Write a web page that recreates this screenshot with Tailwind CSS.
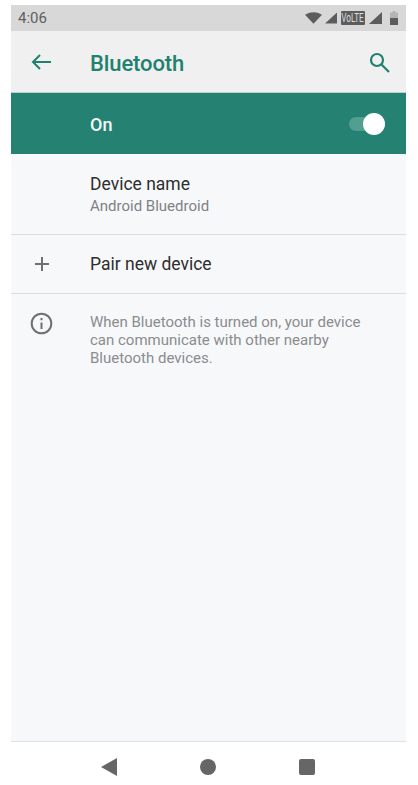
<!doctype html>
<html><head><meta charset="utf-8"><script src="https://cdn.jsdelivr.net/npm/@tailwindcss/browser@4"></script></head>
<body class="bg-white font-['Roboto',sans-serif]">
<div class="w-[418px] h-[785px] overflow-hidden bg-white pt-[5px] flex flex-col">
  <div class="ml-[11px] w-[395px] flex-1 flex flex-col bg-[#f7f8fa]">
    <div class="h-[26px] bg-[#d8d8d8] flex items-center justify-between pl-[7px] pr-[8px] shrink-0">
      <span class="text-[15px] text-[#5f5f5f] leading-none">4:06</span>
      <div class="flex items-center gap-[3px]">
        <svg width="17" height="12" viewBox="0 0 18 12"><path d="M0 2.5Q9-2.5 18 2.5L9 12Z" fill="#5c5c5c"/></svg>
        <svg width="12" height="12" viewBox="0 0 13 12"><path d="M13 0V12H0Z" fill="#5c5c5c"/></svg>
        <span class="ml-[1px] bg-[#5c5c5c] text-[#dcdcdc] h-[14px] w-[24px] rounded-[1px] flex items-center justify-center overflow-hidden"><span class="inline-block text-[12px] leading-[14px] whitespace-nowrap scale-x-[0.68]">VoLTE</span></span>
        <svg class="ml-[1px]" width="13" height="12" viewBox="0 0 13 12"><path d="M13 0V12H0Z" fill="#5c5c5c"/></svg>
        <svg class="ml-[5px]" width="8" height="14" viewBox="0 0 8 14"><path d="M2.5 0H5.5V1.5H8V14H0V1.5H2.5Z" fill="#b4b4b4"/><path d="M0 7H8V14H0Z" fill="#5c5c5c"/></svg>
      </div>
    </div>
    <div class="h-[62px] bg-[#f0f0f0] flex items-center shrink-0 border-b border-[#b9d2cc] pt-[1px]">
      <div class="w-[79px] pl-[19px] flex items-center shrink-0">
        <svg width="22" height="18" viewBox="0 0 22 18" fill="none" stroke="#21816f" stroke-width="2"><path d="M21 9H3M10 2 3 9l7 7"/></svg>
      </div>
      <span class="text-[22px] font-medium text-[#21816f] flex-1 leading-none pt-[3px] tracking-[-0.1px]">Bluetooth</span>
      <svg class="mr-[16px]" width="21" height="21" viewBox="0 0 21 21" fill="none" stroke="#21816f" stroke-width="2.2"><circle cx="8" cy="8" r="6"/><path d="M12.5 12.5 20 20"/></svg>
    </div>
    <div class="h-[61px] bg-[#258272] flex items-center shrink-0">
      <span class="pl-[79px] text-[18px] font-medium text-[#f4f8f7] flex-1 pt-[1px] tracking-[0.1px]">On</span>
      <div class="relative mr-[21px] w-[36px] h-[14px] rounded-full bg-[#5ba697]/80">
        <div class="absolute right-0 -top-[4px] w-[22px] h-[22px] rounded-full bg-white"></div>
      </div>
    </div>
    <div class="h-[81px] border-b border-[#dcdde0] pl-[79px] flex flex-col justify-center shrink-0">
      <div class="text-[17.5px] leading-[24px] text-[#2e2e2e]">Device name</div>
      <div class="text-[15px] leading-[20px] text-[#808285]">Android Bluedroid</div>
    </div>
    <div class="h-[59px] border-b border-[#dcdde0] flex items-center shrink-0">
      <div class="w-[79px] pl-[22px] shrink-0">
        <svg width="18" height="18" viewBox="0 0 18 18" fill="none" stroke="#6f7072" stroke-width="2"><path d="M9 2V16M2 9H16"/></svg>
      </div>
      <span class="text-[17.5px] text-[#2e2e2e] pt-[1px]">Pair new device</span>
    </div>
    <div class="flex pt-[18px] flex-1">
      <div class="w-[79px] pl-[19px] shrink-0">
        <svg width="23" height="23" viewBox="0 0 23 23" fill="none" stroke="#6f7072" stroke-width="2"><circle cx="11.5" cy="11.5" r="9.8"/><path d="M11.5 10.5V17M11.5 6V8.2"/></svg>
      </div>
      <p class="text-[15px] leading-[18px] text-[#8a8c8f] w-[290px] pt-[1px]">When Bluetooth is turned on, your device can communicate with other nearby Bluetooth devices.</p>
    </div>
    <div class="h-px bg-[#dfe0e2] shrink-0"></div>
  </div>
  <div class="h-[43px] bg-white shrink-0 flex items-center justify-center gap-[83px] pt-[7px] pr-[2px]">
    <svg width="16" height="18" viewBox="0 0 16 18"><path d="M16 0V18L0 9Z" fill="#666"/></svg>
    <div class="w-[16px] h-[16px] rounded-full bg-[#666]"></div>
    <div class="w-[16px] h-[16px] rounded-[2px] bg-[#666]"></div>
  </div>
</div>
</body></html>
